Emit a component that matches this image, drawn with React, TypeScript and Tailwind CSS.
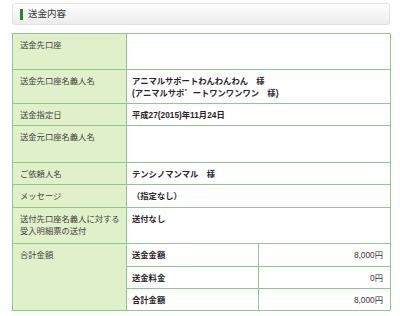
const rows: { label: string[]; value: string[]; h: string }[] = [
  { label: ['送金先口座'], value: [], h: 'h-[36px]' },
  {
    label: ['送金先口座名義人名'],
    value: ['アニマルサポートわんわんわん　様', '(アニマルサポ゛ートワンワンワン　様)'],
    h: 'h-[34px]',
  },
  { label: ['送金指定日'], value: ['平成27(2015)年11月24日'], h: 'h-[22px]' },
  { label: ['送金元口座名義人名'], value: [], h: 'h-[37px]' },
  { label: ['ご依頼人名'], value: ['テンシノマンマル　様'], h: 'h-[22px]' },
  { label: ['メッセージ'], value: ['（指定なし）'], h: 'h-[23px]' },
  {
    label: ['送付先口座名義人に対する', '受入明細票の送付'],
    value: ['送付なし'],
    h: 'h-[36px]',
  },
]

const totals = [
  { label: '送金金額', amount: '8,000円', h: 'h-[23px]' },
  { label: '送金料金', amount: '0円', h: 'h-[22px]' },
  { label: '合計金額', amount: '8,000円', h: 'h-[22px]' },
]

export default function App() {
  return (
    <div
      className="w-[400px] h-[316px] bg-white pt-[3px] px-[12px] overflow-hidden text-[#333]"
      style={{ fontFamily: '"Liberation Sans", "Noto Sans CJK JP", sans-serif' }}
    >
      {/* Section header */}
      <div className="h-[22px] w-[378px] flex items-center gap-[5px] pl-[7px] rounded-[3px] border border-[#e2e2e2] bg-gradient-to-b from-white to-[#ececec]">
        <span className="w-[3px] h-[11px] bg-[#1e8a2a]" />
        <span className="text-[9.5px] text-[#333] leading-none">送金内容</span>
      </div>

      {/* Detail table */}
      <table className="mt-[8px] w-[378px] border-collapse table-fixed text-[8.3px] leading-[12px]">
        <colgroup>
          <col className="w-[114px]" />
          <col className="w-[132px]" />
          <col className="w-[132px]" />
        </colgroup>
        <tbody>
          {rows.map((r, i) => (
            <tr key={i} className={r.h}>
              <td className="border border-[#8cca8c] bg-[#e0f0c9] align-top pl-[7px] pt-[5px] text-[#444]">
                {r.label.map((l, j) => (
                  <div key={j}>{l}</div>
                ))}
              </td>
              <td
                colSpan={2}
                className="border border-[#8cca8c] bg-white align-top pl-[5px] pt-[5px] font-bold text-[#2a1f2a]"
              >
                {r.value.map((v, j) => (
                  <div key={j}>{v}</div>
                ))}
              </td>
            </tr>
          ))}
          {totals.map((t, i) => (
            <tr key={t.label} className={t.h}>
              {i === 0 && (
                <td
                  rowSpan={3}
                  className="border border-[#8cca8c] bg-[#e0f0c9] align-top pl-[7px] pt-[5px] text-[#444]"
                >
                  合計金額
                </td>
              )}
              <td className="border border-[#8cca8c] bg-white align-top pl-[5px] pt-[5px] font-bold text-[#2a1f2a]">
                {t.label}
              </td>
              <td className="border border-[#8cca8c] bg-white align-top pr-[7px] pt-[5px] text-right text-[#333]">
                {t.amount}
              </td>
            </tr>
          ))}
        </tbody>
      </table>
    </div>
  )
}
